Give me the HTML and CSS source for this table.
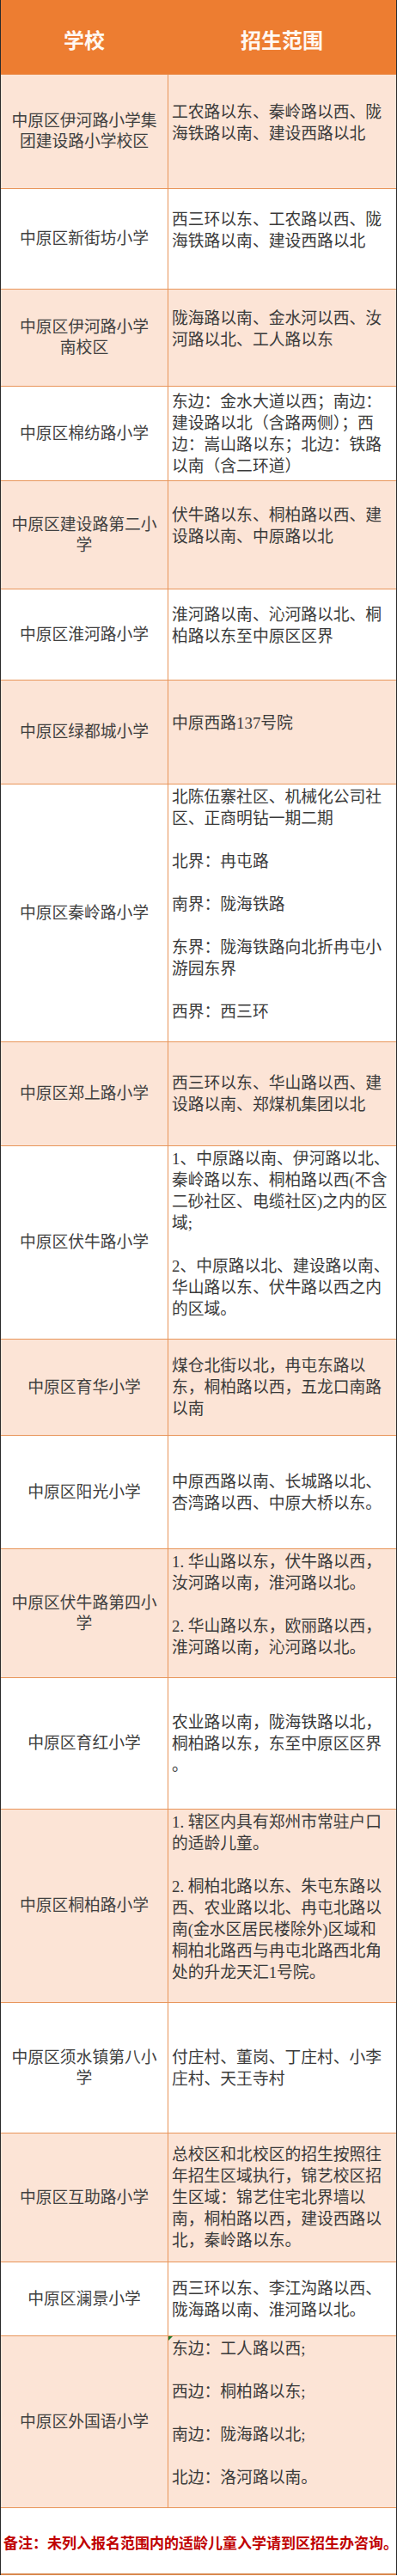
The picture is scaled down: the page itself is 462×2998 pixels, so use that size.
FILE: index.html
```html
<!DOCTYPE html>
<html lang="zh-CN">
<head>
<meta charset="utf-8">
<title>中原区小学招生范围</title>
<link rel="stylesheet" href="styles.css">
</head>
<body>
<div class="sheet">
  <div class="row head">
    <div class="hcell">学校</div>
    <div class="hcell">招生范围</div>
  </div>
  <div class="row peach">
    <div class="cl">中原区伊河路小学集<br>团建设路小学校区</div>
    <div class="cr tail">工农路以东、秦岭路以西、陇<br>海铁路以南、建设西路以北</div>
  </div>
  <div class="row">
    <div class="cl">中原区新街坊小学</div>
    <div class="cr tail">西三环以东、工农路以西、陇<br>海铁路以南、建设西路以北</div>
  </div>
  <div class="row peach">
    <div class="cl">中原区伊河路小学<br>南校区</div>
    <div class="cr tail">陇海路以南、金水河以西、汝<br>河路以北、工人路以东</div>
  </div>
  <div class="row">
    <div class="cl">中原区棉纺路小学</div>
    <div class="cr">东边：金水大道以西；南边：<br>建设路以北（含路两侧）；西<br>边：嵩山路以东；北边：铁路<br>以南（含二环道）</div>
  </div>
  <div class="row peach">
    <div class="cl">中原区建设路第二小<br>学</div>
    <div class="cr tail">伏牛路以东、桐柏路以西、建<br>设路以南、中原路以北</div>
  </div>
  <div class="row">
    <div class="cl">中原区淮河路小学</div>
    <div class="cr tail">淮河路以南、沁河路以北、桐<br>柏路以东至中原区区界</div>
  </div>
  <div class="row peach">
    <div class="cl">中原区绿都城小学</div>
    <div class="cr tail">中原西路137号院</div>
  </div>
  <div class="row">
    <div class="cl">中原区秦岭路小学</div>
    <div class="cr tail">北陈伍寨社区、机械化公司社<br>区、正商明钻一期二期<br><br>北界：冉屯路<br><br>南界：陇海铁路<br><br>东界：陇海铁路向北折冉屯小<br>游园东界<br><br>西界：西三环</div>
  </div>
  <div class="row peach">
    <div class="cl">中原区郑上路小学</div>
    <div class="cr">西三环以东、华山路以西、建<br>设路以南、郑煤机集团以北</div>
  </div>
  <div class="row">
    <div class="cl">中原区伏牛路小学</div>
    <div class="cr tail">1、中原路以南、伊河路以北、<br>秦岭路以东、桐柏路以西(不含<br>二砂社区、电缆社区)之内的区<br>域;<br><br>2、中原路以北、建设路以南、<br>华山路以东、伏牛路以西之内<br>的区域。</div>
  </div>
  <div class="row peach">
    <div class="cl">中原区育华小学</div>
    <div class="cr">煤仓北街以北，冉屯东路以<br>东，桐柏路以西，五龙口南路<br>以南</div>
  </div>
  <div class="row">
    <div class="cl">中原区阳光小学</div>
    <div class="cr">中原西路以南、长城路以北、<br>杏湾路以西、中原大桥以东。</div>
  </div>
  <div class="row peach">
    <div class="cl">中原区伏牛路第四小<br>学</div>
    <div class="cr tail">1. 华山路以东，伏牛路以西，<br>汝河路以南，淮河路以北。<br><br>2. 华山路以东，欧丽路以西，<br>淮河路以南，沁河路以北。</div>
  </div>
  <div class="row">
    <div class="cl">中原区育红小学</div>
    <div class="cr">农业路以南，陇海铁路以北，<br>桐柏路以东，东至中原区区界<br>。</div>
  </div>
  <div class="row peach">
    <div class="cl">中原区桐柏路小学</div>
    <div class="cr tail">1. 辖区内具有郑州市常驻户口<br>的适龄儿童。<br><br>2. 桐柏北路以东、朱屯东路以<br>西、农业路以北、冉屯北路以<br>南(金水区居民楼除外)区域和<br>桐柏北路西与冉屯北路西北角<br>处的升龙天汇1号院。</div>
  </div>
  <div class="row">
    <div class="cl">中原区须水镇第八小<br>学</div>
    <div class="cr">付庄村、董岗、丁庄村、小李<br>庄村、天王寺村</div>
  </div>
  <div class="row peach">
    <div class="cl">中原区互助路小学</div>
    <div class="cr">总校区和北校区的招生按照往<br>年招生区域执行，锦艺校区招<br>生区域：锦艺住宅北界墙以<br>南，桐柏路以西，建设西路以<br>北，秦岭路以东。</div>
  </div>
  <div class="row">
    <div class="cl">中原区澜景小学</div>
    <div class="cr">西三环以东、李江沟路以西、<br>陇海路以南、淮河路以北。</div>
  </div>
  <div class="row peach">
    <div class="cl">中原区外国语小学</div>
    <div class="cr tail flag">东边：工人路以西;<br><br>西边：桐柏路以东;<br><br>南边：陇海路以北;<br><br>北边：洛河路以南。</div>
  </div>
  <div class="row foot">
    <div class="note">备注：未列入报名范围内的适龄儿童入学请到区招生办咨询。</div>
  </div>
</div>
</body>
</html>
```

FILE: styles.css
```css
html, body {
  margin: 0;
  padding: 0;
  background: #ffffff;
}

.sheet {
  width: 462px;
  box-sizing: border-box;
  border-left: 1px solid #2b2b2b;
  border-right: 1px solid #2b2b2b;
  font-family: "Liberation Serif", "Noto Sans CJK SC", serif;
  font-size: 18.8px;
  color: #404040;
}

.row {
  display: grid;
  grid-template-columns: 194px 1fr;
  box-sizing: border-box;
  border-bottom: 1px solid #e8955a;
  background: #ffffff;
}

.row.peach {
  background: #fce4d6;
}

.row.head {
  background: #ed7d31;
  border-bottom-color: #e98a47;
}

.hcell {
  display: flex;
  align-items: center;
  justify-content: center;
  padding-top: 4px;
  font-family: "Noto Sans CJK SC", sans-serif;
  font-weight: bold;
  font-size: 24px;
  color: #fff8f2;
}

.cl {
  display: flex;
  align-items: center;
  justify-content: center;
  text-align: center;
  line-height: 24px;
  white-space: nowrap;
}

.cr {
  position: relative;
  display: flex;
  align-items: center;
  border-left: 1px solid #e8955a;
  padding-left: 4px;
  line-height: 25px;
  white-space: nowrap;
  color: #3a3a3a;
}

.cr.tail {
  padding-bottom: 21px;
}

.cr.flag::before {
  content: "";
  position: absolute;
  left: 0;
  top: 0;
  border-top: 5px solid #1d7a2e;
  border-right: 5px solid transparent;
}

.row.foot {
  display: flex;
  align-items: center;
  border-bottom: 2px solid #d9894f;
}

.note {
  padding-left: 3px;
  padding-top: 2px;
  font-family: "Noto Sans CJK SC", sans-serif;
  font-weight: bold;
  font-size: 17px;
  color: #c00000;
  white-space: nowrap;
}

.sheet > .row:nth-child(1) { height: 87px; }
.sheet > .row:nth-child(2) { height: 133px; }
.sheet > .row:nth-child(3) { height: 117px; }
.sheet > .row:nth-child(4) { height: 113px; }
.sheet > .row:nth-child(5) { height: 110px; }
.sheet > .row:nth-child(6) { height: 126px; }
.sheet > .row:nth-child(7) { height: 106px; }
.sheet > .row:nth-child(8) { height: 121px; }
.sheet > .row:nth-child(9) { height: 300px; }
.sheet > .row:nth-child(10) { height: 121px; }
.sheet > .row:nth-child(11) { height: 225px; }
.sheet > .row:nth-child(12) { height: 112px; }
.sheet > .row:nth-child(13) { height: 132px; }
.sheet > .row:nth-child(14) { height: 150px; }
.sheet > .row:nth-child(15) { height: 153px; }
.sheet > .row:nth-child(16) { height: 225px; }
.sheet > .row:nth-child(17) { height: 152px; }
.sheet > .row:nth-child(18) { height: 150px; }
.sheet > .row:nth-child(19) { height: 86px; }
.sheet > .row:nth-child(20) { height: 200px; }
.sheet > .row:nth-child(21) { height: 78px; }
```
